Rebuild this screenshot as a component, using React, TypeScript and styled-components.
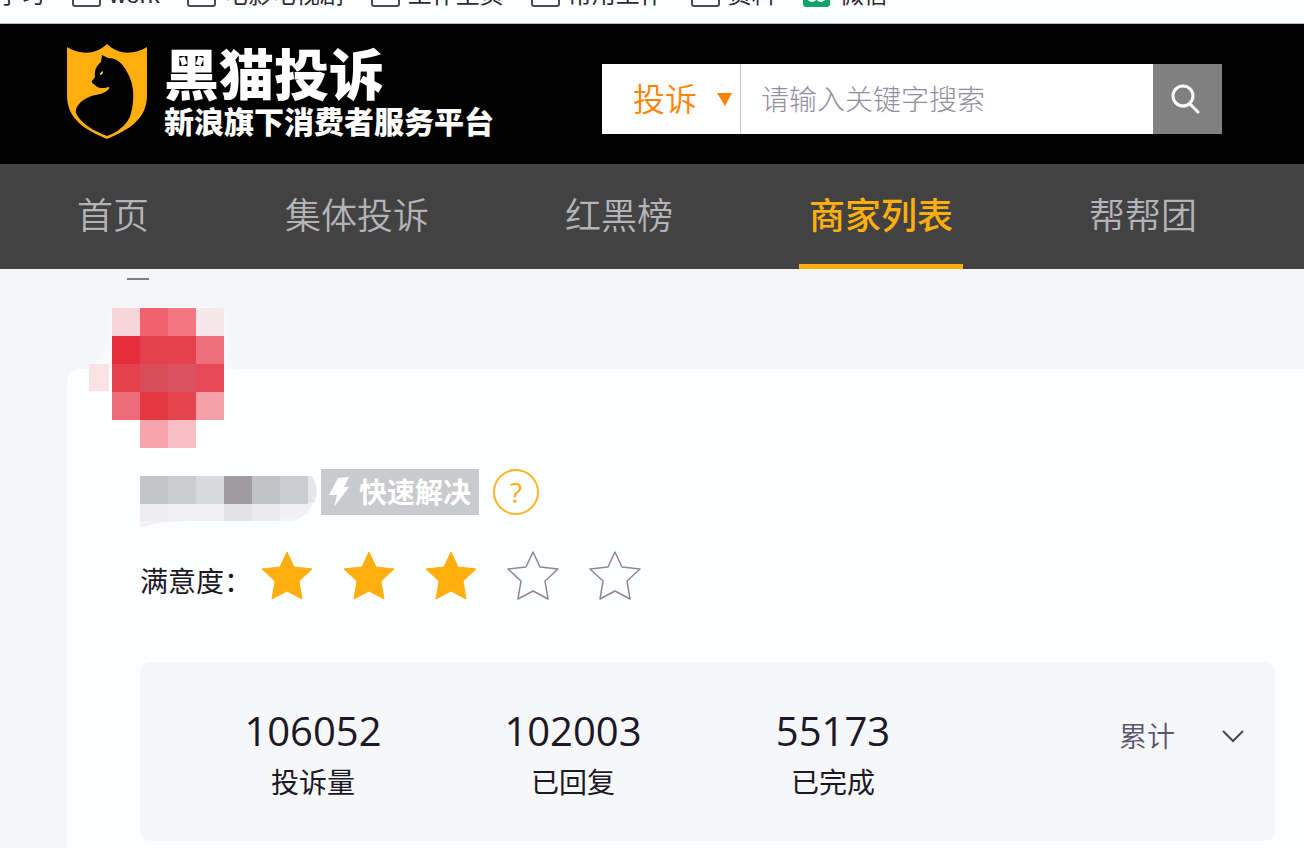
import React from "react";
import styled, { createGlobalStyle } from "styled-components";

const GlobalStyle = createGlobalStyle`
  *, *::before, *::after { box-sizing: border-box; }
  html, body { margin: 0; padding: 0; }
  body {
    background: #f5f6f8;
    color: #1c1826;
    font-family: "Open Sans", "Noto Sans CJK SC", sans-serif;
    overflow-x: hidden;
  }
  button, input, select { font-family: inherit; border: 0; border-radius: 0; margin: 0; }
  h1, p, dl, dd { margin: 0; }
  svg { display: block; flex: none; }
`;

const Page = styled.div`
  display: flex;
  flex-direction: column;
  min-height: 100vh;
`;

const BookmarkBar = styled.nav`
  display: flex;
  align-items: flex-end;
  gap: 27px;
  flex: none;
  height: 24px;
  padding-bottom: 15px;
  overflow: hidden;
  background: #fdfeff;
  border-bottom: 1px solid #b9b9bd;
  font-family: "Liberation Sans", "Noto Sans CJK SC", sans-serif;
`;

const Bookmark = styled.a`
  display: flex;
  align-items: flex-end;
  gap: 8px;
  flex: none;
  color: #2b2b35;
  font-size: 24px;
  line-height: 26px;
  white-space: nowrap;
  text-decoration: none;
  &:first-child { margin-left: -3px; }
`;

const BookmarkIcon = styled.svg`
  margin-bottom: 1px;
`;

const Header = styled.header`
  display: flex;
  align-items: center;
  justify-content: space-between;
  flex: none;
  height: 140px;
  padding: 0 82px 0 67px;
  background: #000;
`;

const Brand = styled.a`
  display: flex;
  align-items: center;
  gap: 16px;
  margin-bottom: 4px;
  color: #fff;
  text-decoration: none;
  white-space: nowrap;
`;

const BrandText = styled.div`
  display: flex;
  flex-direction: column;
`;

const BrandName = styled.h1`
  font-size: 55px;
  line-height: 60px;
  font-weight: 900;
`;

const BrandSlogan = styled.p`
  font-size: 30px;
  line-height: 36px;
  font-weight: 900;
`;

const SearchForm = styled.form`
  display: flex;
  flex: 0 1 620px;
  height: 70px;
  margin-top: 10px;
  background: #fff;
`;

const TypeField = styled.label`
  display: flex;
  align-items: center;
  gap: 20px;
  padding: 0 8px 0 31px;
  border-right: 1px solid #c9c9d2;
`;

const TypeSelect = styled.select`
  appearance: none;
  width: 64px;
  padding: 0;
  background: transparent;
  color: #ff8200;
  font-size: 32px;
  font-weight: 350;
  line-height: 48px;
`;

const SearchInput = styled.input`
  flex: 1;
  min-width: 0;
  padding: 0 20px;
  background: transparent;
  color: #444;
  font-size: 28px;
  font-weight: 300;
  &::placeholder { color: #928e9e; opacity: 1; }
`;

const SearchButton = styled.button`
  display: flex;
  align-items: center;
  justify-content: center;
  width: 69px;
  padding: 0 6px 0 0;
  background: #808080;
`;

const MainNav = styled.nav`
  display: flex;
  gap: 116px;
  flex: none;
  height: 105px;
  padding-left: 67px;
  background: #424242;
`;

const NavLink = styled.a<{ $active?: boolean }>`
  flex: none;
  padding: 0 10px;
  border-bottom: 5px solid ${(p) => (p.$active ? "#ffae0d" : "transparent")};
  color: ${(p) => (p.$active ? "#ffae0d" : "#b4b4b8")};
  font-size: 36px;
  font-weight: ${(p) => (p.$active ? 500 : 350)};
  line-height: 104px;
  text-decoration: none;
`;

const Content = styled.main`
  display: flex;
  flex-direction: column;
  flex: 1;
  padding-left: 67px;
`;

const Crumb = styled.div`
  flex: none;
  height: 100px;
  padding: 9px 0 0 60px;
`;

const CrumbMark = styled.div`
  width: 22px;
  height: 2px;
  background: #7d7d88;
`;

const Card = styled.section`
  position: relative;
  flex: 1;
  padding: 100px 29px 7px 73px;
  border-top-left-radius: 14px;
  background: #fdfeff;
`;

const Avatar = styled.svg`
  position: absolute;
  left: 21px;
  top: -63px;
`;

const NameRow = styled.div`
  display: flex;
  align-items: flex-start;
`;

const QuickBadge = styled.span`
  display: flex;
  align-items: center;
  gap: 8px;
  height: 46px;
  margin: 0 14px 0 4px;
  padding: 0 8px;
  background: #c9cacd;
  color: #fff;
  font-size: 28px;
  font-weight: 700;
  line-height: 44px;
`;

const HelpButton = styled.button`
  width: 46px;
  height: 46px;
  padding: 0;
  border: 2px solid #ffb52b;
  border-radius: 50%;
  background: transparent;
  color: #ffae0d;
  font-size: 28px;
  line-height: 40px;
`;

const RatingRow = styled.div`
  display: flex;
  align-items: flex-start;
  height: 56px;
  margin-top: 22px;
`;

const RatingLabel = styled.span`
  width: 121px;
  font-size: 28px;
  line-height: 60px;
  white-space: nowrap;
`;

const Stars = styled.div`
  display: flex;
  gap: 30px;
`;

const StatsPanel = styled.div`
  display: flex;
  align-items: flex-start;
  justify-content: space-between;
  height: 179px;
  margin-top: 55px;
  padding: 44px 30px 0 43px;
  border-radius: 10px;
  background: #f6f7f9;
`;

const StatList = styled.dl`
  display: flex;
`;

const Stat = styled.div`
  display: flex;
  flex-direction: column-reverse;
  width: 260px;
  text-align: center;
`;

const StatLabel = styled.dt`
  font-size: 28px;
  line-height: 52px;
`;

const StatValue = styled.dd`
  font-size: 40px;
  line-height: 50px;
`;

const PeriodField = styled.label`
  display: flex;
  align-items: center;
  gap: 46px;
  height: 60px;
`;

const PeriodSelect = styled.select`
  appearance: none;
  width: 56px;
  padding: 0;
  background: transparent;
  color: #5c566b;
  font-size: 28px;
  font-weight: 350;
  line-height: 40px;
`;

const bookmarks = ["学习", "work", "电影电视剧", "工作主页", "常用工作", "资料"];
const navItems = ["首页", "集体投诉", "红黑榜", "商家列表", "帮帮团"];
const stats = [
  ["106052", "投诉量"],
  ["102003", "已回复"],
  ["55173", "已完成"],
];

const avatarCells: [number, number, string][] = [
  [0, 0, "#f8d5d9"], [1, 0, "#f0626d"], [2, 0, "#f27780"], [3, 0, "#f4e8eb"],
  [0, 1, "#e62f3a"], [1, 1, "#e3414c"], [2, 1, "#e5404c"], [3, 1, "#ee6f7c"],
  [0, 2, "#e5404c"], [1, 2, "#da4e5a"], [2, 2, "#dc5360"], [3, 2, "#e84956"],
  [0, 3, "#ec6b7a"], [1, 3, "#e33741"], [2, 3, "#e5434e"], [3, 3, "#f2a0aa"],
  [1, 4, "#f6a5ad"], [2, 4, "#f8bfc6"],
];

const nameCells = ["#c4c5c7", "#cbccce", "#d8d9db", "#9f9c9f", "#c1c3c7", "#caccd1"];
const nameShade = ["#ededf0", "#f0f0f2", "#f0f0f2", "#e3e3e6", "#ececee", "#f0f0f2"];

const FolderIcon = () => (
  <BookmarkIcon width="29" height="26" viewBox="0 0 29 26" fill="none" stroke="#4b4b55" strokeWidth="2">
    <path d="M1 3Q1 1 3 1H10L13 5H26Q28 5 28 7V23Q28 25 26 25H3Q1 25 1 23Z" />
  </BookmarkIcon>
);

const ChatIcon = () => (
  <BookmarkIcon width="29" height="28" viewBox="0 0 29 28">
    <rect width="27" height="28" rx="3" fill="#0da566" />
    <circle cx="9" cy="18" r="5" fill="#fff" />
    <circle cx="18" cy="18" r="5" fill="#fff" />
    <circle cx="9" cy="18" r="2" fill="#0da566" />
    <circle cx="18" cy="18" r="2" fill="#0da566" />
  </BookmarkIcon>
);

const ShieldLogo = () => (
  <svg width="81" height="96" viewBox="0 0 81 96" aria-hidden="true">
    <path
      d="M0 3C13 11 29 11 40 0C51 11 67 11 80 3V51C80 76 61 86 40 95C19 86 0 76 0 51Z"
      fill="#ffae0d"
    />
    <path
      d="M35 11L41 14C50 14 56 20 60 28C65 37 67 45 66 57C65 70 62 78 54 84C50 88 45 90 40 92C27 87 14 80 9 69C8 64 12 58 20 54C27 50 33 51 38 48C41 46 43 45 42 43C38 44 32 45 29 42C27 40 24 39 25 37L28 33C27 26 30 21 34 18Z"
      fill="#000"
    />
    <path d="M33 31Q33 28 36 27Q36 31 33 31Z" fill="#ffd27a" />
  </svg>
);

const Star = ({ filled }: { filled: boolean }) => (
  <svg width="52" height="50" viewBox="0 0 52 50" aria-hidden="true">
    <path
      d="M26 1L33 16L51 18L38 30L41 48L26 40L11 48L14 30L1 18L19 16Z"
      fill={filled ? "#ffae0d" : "none"}
      stroke={filled ? "#ffae0d" : "#8a8790"}
      strokeWidth={filled ? 1 : 1.5}
      strokeLinejoin="round"
    />
  </svg>
);

export default function App() {
  return (
    <Page>
      <GlobalStyle />
      <BookmarkBar aria-label="书签">
        {bookmarks.map((name, i) => (
          <Bookmark href="#" key={name}>
            {i > 0 && <FolderIcon />}
            {name}
          </Bookmark>
        ))}
        <Bookmark href="#">
          <ChatIcon />
          微信
        </Bookmark>
      </BookmarkBar>

      <Header>
        <Brand href="#">
          <ShieldLogo />
          <BrandText>
            <BrandName>黑猫投诉</BrandName>
            <BrandSlogan>新浪旗下消费者服务平台</BrandSlogan>
          </BrandText>
        </Brand>
        <SearchForm onSubmit={(e) => e.preventDefault()}>
          <TypeField>
            <TypeSelect aria-label="搜索类型" defaultValue="投诉">
              <option>投诉</option>
            </TypeSelect>
            <svg width="15" height="13" viewBox="0 0 15 13" aria-hidden="true">
              <path d="M0 0H15L8 13Z" fill="#ff8200" />
            </svg>
          </TypeField>
          <SearchInput type="text" aria-label="搜索" placeholder="请输入关键字搜索" />
          <SearchButton type="submit" aria-label="搜索">
            <svg width="32" height="32" viewBox="0 0 32 32" fill="none" stroke="#fff" strokeWidth="3" strokeLinecap="round">
              <circle cx="14" cy="13" r="10" />
              <path d="M21 21L29 29" />
            </svg>
          </SearchButton>
        </SearchForm>
      </Header>

      <MainNav>
        {navItems.map((name) => (
          <NavLink href="#" key={name} $active={name === "商家列表"}>
            {name}
          </NavLink>
        ))}
      </MainNav>

      <Content>
        <Crumb>
          <CrumbMark />
        </Crumb>
        <Card>
          <Avatar width="150" height="150" viewBox="0 0 150 150" aria-hidden="true">
            <path d="M6 58Q14 40 20 38V10Q22 0 40 0H120Q140 2 140 20V50Q144 62 150 63V150H0V70Z" fill="#f8f9fb" />
            <path d="M0 63H150V150H0Z" fill="#fdfeff" />
            <rect x="1" y="58" width="20" height="27" fill="#fbe2e5" />
            {avatarCells.map(([col, row, fill]) => (
              <rect key={`${col}-${row}`} x={24 + col * 28} y={2 + row * 28} width="28" height="28" fill={fill} />
            ))}
          </Avatar>

          <NameRow>
            <svg width="177" height="60" viewBox="0 0 177 60" aria-hidden="true">
              <path d="M0 7H172Q180 20 174 32Q166 52 148 52H50Q20 52 0 59Z" fill="#f2f2f4" />
              {nameShade.map((fill, i) => (
                <rect key={i} x={i * 28} y="35" width="28" height={i > 4 ? 10 : 17} fill={fill} />
              ))}
              <path d="M168 7H172Q180 20 174 34H168Z" fill="#e6e7e9" />
              {nameCells.map((fill, i) => (
                <rect key={i} x={i * 28} y="7" width="28" height="28" fill={fill} />
              ))}
            </svg>
            <QuickBadge>
              <svg width="22" height="30" viewBox="0 0 22 30" aria-hidden="true">
                <path d="M9 1L20 0L15 10H20L5 30L8 18H0Z" fill="#fff" />
              </svg>
              快速解决
            </QuickBadge>
            <HelpButton type="button" aria-label="帮助">?</HelpButton>
          </NameRow>

          <RatingRow>
            <RatingLabel>满意度：</RatingLabel>
            <Stars role="img" aria-label="3 / 5">
              {[1, 2, 3, 4, 5].map((n) => (
                <Star key={n} filled={n <= 3} />
              ))}
            </Stars>
          </RatingRow>

          <StatsPanel>
            <StatList>
              {stats.map(([value, label]) => (
                <Stat key={label}>
                  <StatLabel>{label}</StatLabel>
                  <StatValue>{value}</StatValue>
                </Stat>
              ))}
            </StatList>
            <PeriodField>
              <PeriodSelect aria-label="统计周期" defaultValue="累计">
                <option>累计</option>
              </PeriodSelect>
              <svg width="24" height="14" viewBox="0 0 24 14" fill="none" stroke="#4a4655" strokeWidth="2" aria-hidden="true">
                <path d="M2 2L12 12L22 2" />
              </svg>
            </PeriodField>
          </StatsPanel>
        </Card>
      </Content>
    </Page>
  );
}
